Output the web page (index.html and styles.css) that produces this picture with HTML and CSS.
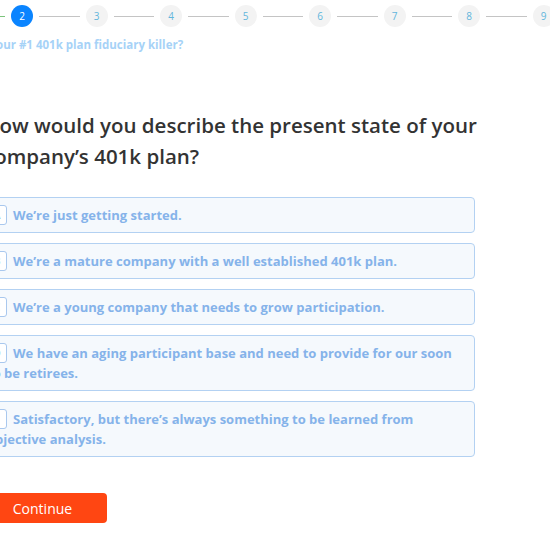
FILE: index.html
```html
<!DOCTYPE html>
<html>
<head>
<meta charset="utf-8">
<link rel="stylesheet" href="styles.css">
</head>
<body>
<div class="stepper">
  <span class="step">1</span><span class="line done"></span>
  <span class="step active">2</span><span class="line"></span>
  <span class="step">3</span><span class="line"></span>
  <span class="step">4</span><span class="line"></span>
  <span class="step">5</span><span class="line"></span>
  <span class="step">6</span><span class="line"></span>
  <span class="step">7</span><span class="line"></span>
  <span class="step">8</span><span class="line"></span>
  <span class="step">9</span>
</div>
<main class="content">
  <p class="subtitle">Is your #1 401k plan fiduciary killer?</p>
  <h1 class="question">How would you describe the present state of your company’s 401k plan?</h1>
  <div class="options">
    <div class="option"><span class="key">A</span>We’re just getting started.</div>
    <div class="option"><span class="key">B</span>We’re a mature company with a well established 401k plan.</div>
    <div class="option"><span class="key">C</span>We’re a young company that needs to grow participation.</div>
    <div class="option"><span class="key">D</span>We have an aging participant base and need to provide for our soon to be retirees.</div>
    <div class="option"><span class="key">E</span>Satisfactory, but there’s always something to be learned from objective analysis.</div>
  </div>
  <button class="continue">Continue</button>
</main>
</body>
</html>
```
FILE: styles.css
```css
* { box-sizing: border-box; }
html, body { margin: 0; padding: 0; background: #fff; overflow: hidden; }
body { font-family: "Open Sans", "Noto Sans", sans-serif; width: 550px; height: 550px; }

.stepper {
  display: flex;
  align-items: center;
  gap: 6px;
  margin-left: -63.5px;
  padding-top: 5px;
  height: 27px;
}
.step {
  flex: 0 0 22px;
  width: 22px;
  height: 22px;
  border-radius: 50%;
  background: #f3f3f3;
  color: #62b6dc;
  font-size: 10px;
  display: flex;
  align-items: center;
  justify-content: center;
}
.step.active { background: #0a84ff; color: #fff; }
.line { flex: 0 0 40.5px; height: 1px; background: #c4c4c4; }
.line.done { background: #7cc47c; }

.content {
  margin-left: -22px;
  width: 497px;
}
.subtitle {
  margin: 11px 0 0 -1px;
  font-size: 11.5px;
  font-weight: 700;
  color: #a6d2f7;
  line-height: 14px;
}
.question {
  margin: 58px -30px 0 6px;
  font-size: 20.5px;
  font-weight: 600;
  color: #333;
  line-height: 31px;
}
.options {
  margin-top: 25px;
  display: flex;
  flex-direction: column;
  gap: 10px;
}
.option {
  background: #f5f9fd;
  border: 1px solid #b3d1f2;
  border-radius: 4px;
  padding: 7px 10px 7px 8px;
  font-size: 13px;
  font-weight: 700;
  color: #85b3ea;
  line-height: 20px;
}
.key {
  display: inline-block;
  width: 20px;
  height: 20px;
  margin-right: 6px;
  border: 1px solid #a9c8ee;
  border-radius: 3px;
  background: #fff;
  font-size: 10px;
  line-height: 18px;
  text-align: center;
  vertical-align: top;
}
.continue {
  margin-top: 36px;
  width: 129px;
  height: 30px;
  border: none;
  border-radius: 4px;
  background: #ff4612;
  color: #fff;
  font-family: "Open Sans", "Noto Sans", sans-serif;
  font-size: 14px;
  display: block;
}
```
